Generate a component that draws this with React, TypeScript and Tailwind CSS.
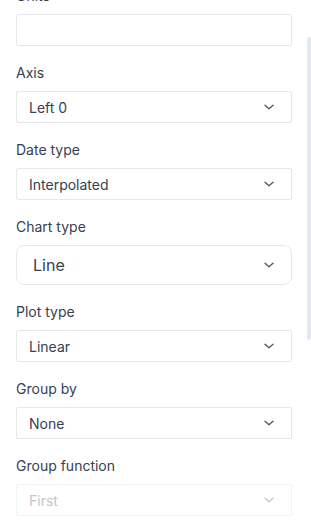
import React from "react";

function Chevron({ className = "" }: { className?: string }) {
  return (
    <svg width="12" height="12" viewBox="0 0 24 24" fill="none" stroke="currentColor" strokeWidth="2.6" strokeLinecap="round" strokeLinejoin="round" className={className}>
      <path d="M4 8.5l8 7 8-7" />
    </svg>
  );
}

function Field({ label, children, last = false }: { label: string; children: React.ReactNode; last?: boolean }) {
  return (
    <div className={last ? "" : "mb-4"}>
      <div className="text-[14px] leading-[21px] text-[#374151] mb-2">{label}</div>
      {children}
    </div>
  );
}

function Select({ value, big = false, disabled = false }: { value: string; big?: boolean; disabled?: boolean }) {
  return (
    <div
      className={
        "flex items-center justify-between bg-white border " +
        (big
          ? "h-[40px] rounded-lg pl-4 pr-4 text-[16px] border-[#e5e7eb] text-[#374151]"
          : disabled
          ? "h-[32px] rounded-[2px] pl-3 pr-4 text-[14px] border-[#f1f2f4] text-[#c2c6cc]"
          : "h-[32px] rounded-[2px] pl-3 pr-4 text-[14px] border-[#e5e7eb] text-[#374151]")
      }
    >
      <span>{value}</span>
      <Chevron className={disabled ? "text-[#c2c6cc]" : "text-[#4b5563]"} />
    </div>
  );
}

export default function App() {
  return (
    <div className="relative w-[311px] h-[528px] overflow-hidden bg-white" style={{ fontFamily: "Inter, 'Noto Sans', sans-serif" }}>
      <div className="pl-4 pr-[19px] -mt-[15px]">
        <Field label="Units">
          <div className="h-[32px] border border-[#e5e7eb] rounded-[2px] bg-white" />
        </Field>
        <Field label="Axis">
          <Select value="Left 0" />
        </Field>
        <Field label="Date type">
          <Select value="Interpolated" />
        </Field>
        <Field label="Chart type">
          <Select value="Line" big />
        </Field>
        <Field label="Plot type">
          <Select value="Linear" />
        </Field>
        <Field label="Group by">
          <Select value="None" />
        </Field>
        <Field label="Group function" last>
          <Select value="First" disabled />
        </Field>
      </div>
      <div className="absolute right-0 top-[37px] w-[4px] h-[303px] rounded-full bg-[#e4e8f0]" />
    </div>
  );
}
